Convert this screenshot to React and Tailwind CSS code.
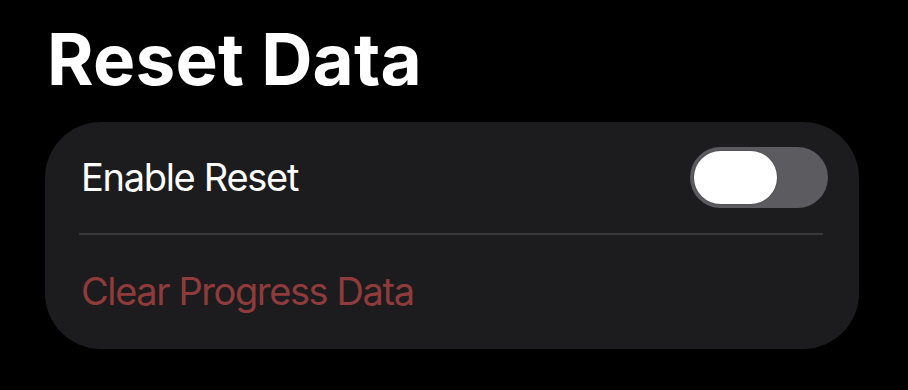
import React, { useState } from 'react';

const Toggle = ({ on, onChange }) => (
    <button
        onClick={() => onChange(!on)}
        className="w-[138px] h-[61px] rounded-full bg-[#5b5b60] p-[4px] flex items-center"
    >
        <span className="block w-[83px] h-[53px] rounded-full bg-white shadow-[0_0_2px_rgba(0,0,0,0.3)]" />
    </button>
);

const App = () => {
    const [enabled, setEnabled] = useState(false);

    return (
        <div className="w-[908px] h-[390px] bg-black overflow-hidden font-['Inter',sans-serif] pl-[45px] pt-[23px]">
            <h1 className="text-[71px] leading-[72px] font-bold text-white tracking-[0.2px] pl-[2px]">
                Reset Data
            </h1>

            {/* Settings card */}
            <div className="mt-[27px] w-[814px] h-[227px] rounded-[56px] bg-[#1c1c1e] flex flex-col">
                <div className="h-[111px] flex items-center justify-between pl-[36px] pr-[31px]">
                    <span className="text-[38px] tracking-[-1.3px] text-white">Enable Reset</span>
                    <Toggle on={enabled} onChange={setEnabled} />
                </div>
                <div className="ml-[34px] mr-[36px] h-[2px] bg-[#38383a]" />
                <div className="flex-1 flex items-center pl-[36px] pb-[2px]">
                    <span className="text-[38px] tracking-[-1.4px] text-[#8f3b3b]">Clear Progress Data</span>
                </div>
            </div>
        </div>
    );
};

export default App;
